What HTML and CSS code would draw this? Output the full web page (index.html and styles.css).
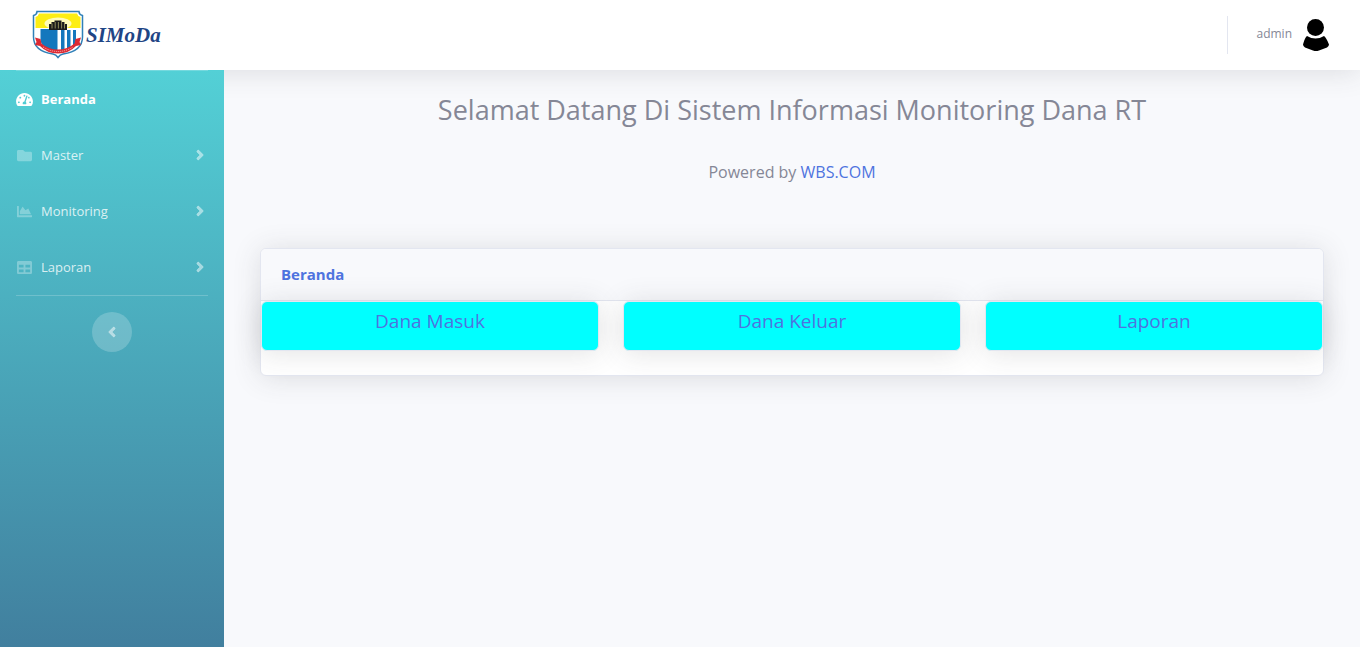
FILE: index.html
```html
<!DOCTYPE html>
<html lang="id">
<head>
<meta charset="utf-8">
<meta name="viewport" content="width=device-width, initial-scale=1">
<title>SIMoDa - Beranda</title>
<link rel="stylesheet" href="styles.css">
</head>
<body>
<header class="topbar">
  <a class="brand" href="#">
    <svg class="brand-crest" viewBox="0 0 52 50" aria-hidden="true">
      <path d="M5 1.500 H47 Q47 4.500 50.500 5.500 V27 C50.500 38 41 42.500 31 44 Q28 44.500 26 47.500 Q24 44.500 21 44 C11 42.500 1.500 38 1.500 27 V5.500 Q5 4.500 5 1.500Z" fill="#fff" stroke="#2f80b8" stroke-width="1.500"/>
      <path d="M7 3.500 H45 Q45.500 6 48.500 7 V18 H3.500 V7 Q6.500 6 7 3.500Z" fill="#fdee12"/>
      <ellipse cx="26" cy="13.500" rx="13.500" ry="6" fill="#fffbb8"/>
      <path d="M8.500 19 H25.500 V42 C17 41 9.500 38 8.500 30Z" fill="#1477bd"/>
      <path d="M29 20h3.500v21H29zM35 20h3.500v19L35 40zM41 20h3v15l-3 2z" fill="#1477bd"/>
      <path d="M17 20v-6h2.500v-2h3v-1.500h7V12h3v2H35v6z" fill="#1b1b1b"/>
      <path d="M20 13.500v5M23.200 12v6.500M26.400 12v6.500M29.600 12v6.500M32.500 13.500v5" stroke="#a9a66a" stroke-width=".8"/>
      <path d="M3 27.500l5.500 1.500 1 4.500Q16.500 39.500 26 39.500t16.500-6L43.500 29l5.500-1.500-1.500 4.500 1.500 3-5 1Q37 43.500 26 43.500T8 36l-5-1 1.500-3z" fill="#dc2a34"/>
      <path d="M11 37Q18 41.500 26 41.500t15-4.500" fill="none" stroke="#f6c4c6" stroke-width="1" stroke-dasharray="1 1"/>
    </svg>
    <span class="brand-name">SIMoDa</span>
  </a>
  <a class="user" href="#">
    <span>admin</span>
    <svg class="user-avatar" viewBox="0 0 28 32" aria-hidden="true"><circle cx="13.500" cy="8.500" r="8.500"/><path d="M5 17Q13.500 22 22 17Q24 18 27 25.500Q27 27 25 28.500L17 31.500Q14 32.500 11 31.500L3 28.500Q1 27 1 25.500Q3 18 5 17Z"/></svg>
  </a>
</header>
<div class="layout">
  <nav class="sidebar" aria-label="Menu utama">
    <ul class="menu">
      <li><a class="menu-link active" href="#">
        <svg class="menu-icon" viewBox="0 0 576 512" aria-hidden="true"><path d="M288 32C128.940 32 0 160.940 0 320c0 52.800 14.250 102.260 39.060 144.800 5.610 9.620 16.300 15.200 27.440 15.200h443c11.140 0 21.830-5.580 27.440-15.200C561.750 422.260 576 372.800 576 320c0-159.060-128.940-288-288-288zm0 64c14.710 0 26.580 10.130 30.320 23.650-1.110 2.260-2.640 4.230-3.450 6.670l-9.220 27.670c-5.130 3.490-10.970 6.010-17.640 6.010-17.670 0-32-14.330-32-32S270.330 96 288 96zM96 384c-17.670 0-32-14.330-32-32s14.330-32 32-32 32 14.330 32 32-14.330 32-32 32zm48-160c-17.670 0-32-14.330-32-32s14.330-32 32-32 32 14.330 32 32-14.330 32-32 32zm246.770-72.410l-61.330 184C343.130 347.330 352 364.540 352 384c0 11.720-3.380 22.550-8.880 32H232.880c-5.500-9.450-8.880-20.280-8.880-32 0-33.940 26.500-61.430 59.900-63.590l61.340-184.010c4.170-12.560 17.730-19.450 30.360-15.170 12.570 4.190 19.350 17.790 15.170 30.360zm14.660 57.200l15.520-46.550c3.470-1.290 7.130-2.230 11.050-2.230 17.670 0 32 14.330 32 32s-14.330 32-32 32c-11.380-.01-20.890-6.280-26.570-15.220zM480 384c-17.670 0-32-14.330-32-32s14.330-32 32-32 32 14.330 32 32-14.330 32-32 32z"/></svg>
        <span>Beranda</span></a></li>
      <li><a class="menu-link" href="#">
        <svg class="menu-icon" viewBox="0 0 576 512" aria-hidden="true"><path transform="translate(32)" d="M464 128H272l-64-64H48C21.490 64 0 85.490 0 112v288c0 26.510 21.490 48 48 48h416c26.510 0 48-21.490 48-48V176c0-26.510-21.490-48-48-48z"/></svg>
        <span>Master</span>
        <svg class="menu-arrow" viewBox="0 0 256 512" aria-hidden="true"><path d="M224.300 273l-136 136c-9.400 9.400-24.600 9.400-33.900 0l-22.600-22.600c-9.400-9.400-9.400-24.600 0-33.900l96.400-96.400-96.400-96.400c-9.400-9.400-9.400-24.600 0-33.900L54.300 103c9.400-9.400 24.600-9.400 33.900 0l136 136c9.500 9.400 9.500 24.600.1 34z"/></svg></a></li>
      <li><a class="menu-link" href="#">
        <svg class="menu-icon" viewBox="0 0 576 512" aria-hidden="true"><path transform="translate(32)" d="M500 384c6.600 0 12 5.400 12 12v40c0 6.600-5.400 12-12 12H12c-6.600 0-12-5.400-12-12V76c0-6.600 5.400-12 12-12h40c6.600 0 12 5.400 12 12v308h436zM372.700 159.500L288 216l-85.300-113.700c-5.100-6.800-15.500-6.300-19.900 1L96 248v104h384l-89.900-187.800c-3.200-6.500-11.400-8.700-17.400-4.700z"/></svg>
        <span>Monitoring</span>
        <svg class="menu-arrow" viewBox="0 0 256 512" aria-hidden="true"><path d="M224.300 273l-136 136c-9.400 9.400-24.600 9.400-33.900 0l-22.600-22.600c-9.400-9.400-9.400-24.600 0-33.900l96.400-96.400-96.400-96.400c-9.400-9.400-9.400-24.600 0-33.900L54.300 103c9.400-9.400 24.600-9.400 33.900 0l136 136c9.500 9.400 9.500 24.600.1 34z"/></svg></a></li>
      <li><a class="menu-link" href="#">
        <svg class="menu-icon" viewBox="0 0 576 512" aria-hidden="true"><path transform="translate(32)" d="M464 32H48C21.490 32 0 53.490 0 80v352c0 26.510 21.490 48 48 48h416c26.510 0 48-21.490 48-48V80c0-26.510-21.490-48-48-48zM224 416H64v-96h160v96zm0-160H64v-96h160v96zm224 160H288v-96h160v96zm0-160H288v-96h160v96z"/></svg>
        <span>Laporan</span>
        <svg class="menu-arrow" viewBox="0 0 256 512" aria-hidden="true"><path d="M224.300 273l-136 136c-9.400 9.400-24.600 9.400-33.900 0l-22.600-22.600c-9.400-9.400-9.400-24.600 0-33.900l96.400-96.400-96.400-96.400c-9.400-9.400-9.400-24.600 0-33.900L54.300 103c9.400-9.400 24.600-9.400 33.900 0l136 136c9.500 9.400 9.500 24.600.1 34z"/></svg></a></li>
    </ul>
    <button class="toggle" type="button" aria-label="Ciutkan menu">
      <svg class="toggle-icon" viewBox="0 0 256 512" aria-hidden="true"><path d="M31.700 239l136-136c9.400-9.400 24.600-9.400 33.900 0l22.600 22.600c9.400 9.400 9.400 24.600 0 33.900L127.900 256l96.400 96.400c9.400 9.400 9.400 24.600 0 33.900L201.700 409c-9.400 9.400-24.600 9.400-33.900 0l-136-136c-9.500-9.400-9.500-24.600-.1-34z"/></svg>
    </button>
  </nav>
  <main class="content">
    <h1 class="title">Selamat Datang Di Sistem Informasi Monitoring Dana RT</h1>
    <p class="powered">Powered by <a href="#">WBS.COM</a></p>
    <section class="card">
      <h2 class="card-header">Beranda</h2>
      <div class="tiles">
        <a class="tile" href="#">Dana Masuk</a>
        <a class="tile" href="#">Dana Keluar</a>
        <a class="tile" href="#">Laporan</a>
      </div>
    </section>
  </main>
</div>
</body>
</html>
```
FILE: styles.css
```css
* { box-sizing: border-box; }

body {
  margin: 0;
  min-height: 100vh;
  display: flex;
  flex-direction: column;
  background: #f8f9fc;
  color: #858796;
  font-family: "Open Sans", "Noto Sans", sans-serif;
  font-size: 16px;
  line-height: 24px;
}

a { color: #4e73df; text-decoration: none; }

.topbar {
  display: flex;
  align-items: center;
  justify-content: space-between;
  height: 70px;
  padding: 0 30px 0 32px;
  background: #fff;
  box-shadow: 0 2px 28px rgba(58, 59, 69, .15);
}

.brand { display: flex; align-items: center; gap: 2px; }
.brand-crest { width: 52px; height: 50px; }
.brand-name {
  color: #1f4585;
  font: italic bold 21px/24px "Liberation Serif", serif;
}

.user {
  display: flex;
  align-items: center;
  gap: 10px;
  height: 38px;
  padding-left: 28px;
  border-left: 1px solid #e3e6f0;
  color: #858796;
  font-size: 12px;
}
.user span { padding-bottom: 2px; }
.user-avatar { width: 28px; height: 32px; fill: #000; }

.layout { flex: 1; display: flex; }

.sidebar {
  position: relative;
  width: 224px;
  flex: none;
  background: linear-gradient(180deg, #53d0d6, #417f9e);
}
.menu {
  margin: 0 16px 16px;
  padding: 0;
  list-style: none;
  border: solid rgba(255, 255, 255, .2);
  border-width: 1px 0;
}
.menu-link {
  display: flex;
  align-items: center;
  gap: 8px;
  height: 56px;
  padding-right: 4px;
  color: rgba(255, 255, 255, .8);
  font-size: 13px;
}
.menu-link.active { color: #fff; font-weight: 700; }
.menu-icon { width: 17px; height: 15px; fill: rgba(255, 255, 255, .3); }
.active .menu-icon { fill: #fff; }
.menu-arrow { width: 8px; height: 16px; margin-left: auto; fill: rgba(255, 255, 255, .5); stroke: rgba(255, 255, 255, .5); stroke-width: 16px; }

.toggle {
  display: flex;
  align-items: center;
  justify-content: center;
  width: 40px;
  height: 40px;
  margin: 0 auto;
  padding: 0;
  border: 0;
  border-radius: 50%;
  background: rgba(255, 255, 255, .2);
}
.toggle-icon { width: 8px; height: 16px; fill: rgba(255, 255, 255, .5); stroke: rgba(255, 255, 255, .5); stroke-width: 16px; }

.content { flex: 1; padding: 24px 36px; }
.title {
  margin: 0 0 34px;
  font-size: 27px;
  font-weight: 400;
  line-height: 32px;
  text-align: center;
}
.powered { margin: 0 0 64px; text-align: center; }

.card {
  border: 1px solid #e3e6f0;
  border-radius: 6px;
  background: #fff;
  box-shadow: 0 2px 28px rgba(58, 59, 69, .15);
}
.card-header {
  margin: 0;
  padding: 13px 20px 14px;
  border-bottom: 1px solid #e3e6f0;
  border-radius: 5px 5px 0 0;
  background: #f8f9fc;
  color: #4e73df;
  font-size: 15px;
  line-height: 24px;
}
.tiles {
  display: grid;
  grid-template-columns: repeat(3, 1fr);
  gap: 24px;
  padding-bottom: 24px;
}
.tile {
  height: 50px;
  padding-top: 7px;
  border: 1px solid #e3e6f0;
  border-radius: 6px;
  background: #0ff;
  box-shadow: 0 2px 28px rgba(58, 59, 69, .15);
  font-size: 19px;
  text-align: center;
}
```
